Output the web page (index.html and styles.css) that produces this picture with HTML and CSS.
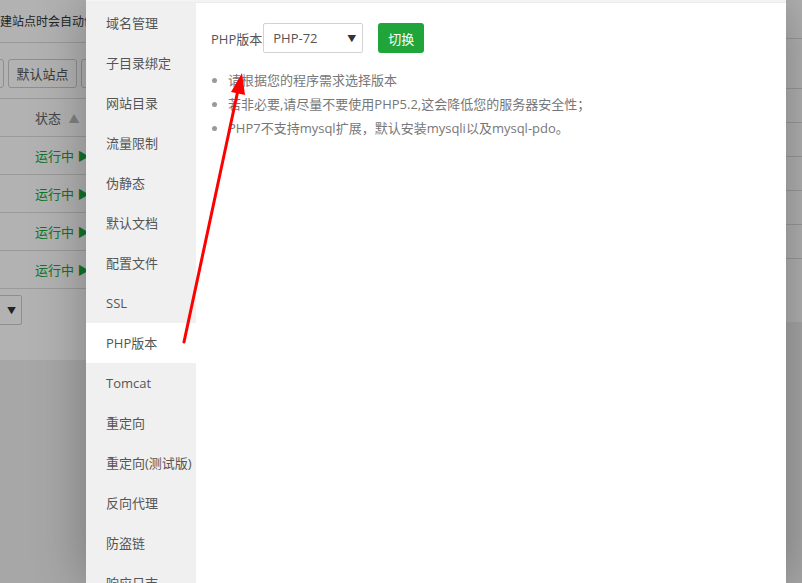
FILE: index.html
```html
<!DOCTYPE html>
<html lang="zh-CN">
<head>
  <meta charset="UTF-8">
  <meta name="viewport" content="width=device-width, initial-scale=1.0">
  <title>网站设置 - PHP版本</title>
  <link rel="stylesheet" href="styles.css">
</head>
<body>
  <!-- background site list (dimmed by the layer shade) -->
  <div class="page">
    <div class="page-left">
      <div class="panel">
        <div class="tip">建站点时会自动创建</div>
        <div class="toolbar">
          <span class="btn btn-cut"></span>
          <span class="btn">默认站点</span>
          <span class="btn btn-next"></span>
        </div>
        <div class="table">
          <div class="row head">状态 <span class="sort">▲</span></div>
          <div class="row"><span class="run">运行中 <i>▶</i></span></div>
          <div class="row"><span class="run">运行中 <i>▶</i></span></div>
          <div class="row"><span class="run">运行中 <i>▶</i></span></div>
          <div class="row"><span class="run">运行中 <i>▶</i></span></div>
        </div>
        <div class="pager"><span class="pager-select">▼</span></div>
      </div>
    </div>
    <div class="page-mid"></div>
    <div class="page-right">
      <div class="panel panel-right">
        <div class="r-row r-top"></div>
        <div class="r-row r-tall"></div>
        <div class="r-row"></div>
        <div class="r-row"></div>
        <div class="r-row"></div>
        <div class="r-row"></div>
        <div class="r-row"></div>
        <div class="r-row r-last"></div>
      </div>
    </div>
  </div>

  <div class="shade"></div>

  <div class="layer">
    <div class="layer-top"></div>
    <div class="layer-body">
      <ul class="side-menu">
        <li>域名管理</li>
        <li>子目录绑定</li>
        <li>网站目录</li>
        <li>流量限制</li>
        <li>伪静态</li>
        <li>默认文档</li>
        <li>配置文件</li>
        <li>SSL</li>
        <li class="active">PHP版本</li>
        <li>Tomcat</li>
        <li>重定向</li>
        <li>重定向(测试版)</li>
        <li>反向代理</li>
        <li>防盗链</li>
        <li>响应日志</li>
      </ul>
      <div class="content">
        <div class="version-line">
          <label class="version-label" for="php-select">PHP版本</label>
          <div class="select-box" id="php-select">
            <span>PHP-72</span>
            <span class="caret">▼</span>
          </div>
          <button class="switch-button">切换</button>
        </div>
        <ul class="help-list">
          <li>请根据您的程序需求选择版本</li>
          <li>若非必要,请尽量不要使用PHP5.2,这会降低您的服务器安全性；</li>
          <li>PHP7不支持mysql扩展，默认安装mysqli以及mysql-pdo。</li>
        </ul>
      </div>
    </div>
  </div>

  <!-- annotation arrow drawn over the screenshot -->
  <svg class="arrow" width="802" height="583" viewBox="0 0 802 583">
    <line x1="184" y1="342" x2="238" y2="90" stroke="#ff0000" stroke-width="3" stroke-linecap="round"/>
    <polygon points="242,73 245,95 231,92" fill="#ff0000"/>
  </svg>
</body>
</html>
```

FILE: styles.css
```css
* {
  margin: 0;
  padding: 0;
  box-sizing: border-box;
}

body {
  width: 802px;
  height: 583px;
  overflow: hidden;
  position: relative;
  font-family: "Open Sans", "Noto Sans CJK SC", sans-serif;
  font-size: 13px;
  color: #333;
  background: #f0f0f0;
}

ul {
  list-style: none;
}

/* background page */
.page {
  display: grid;
  grid-template-columns: 86px 1fr 16px;
  height: 583px;
}

.page-left {
  overflow: hidden;
}

.panel {
  background: #fff;
  height: 360px;
}

.tip {
  height: 43px;
  line-height: 44px;
  font-size: 12px;
  white-space: nowrap;
  overflow: hidden;
  border-bottom: 1px solid #ddd;
}

.toolbar {
  display: flex;
  gap: 4px;
  padding: 16px 0 0 0;
  height: 56px;
  border-bottom: 1px solid #ddd;
  margin-left: -60px;
}

.btn {
  display: flex;
  flex-shrink: 0;
  align-items: center;
  justify-content: center;
  width: 69px;
  height: 29px;
  border: 1px solid #ccc;
  border-radius: 3px;
  font-size: 13px;
  color: #555;
  white-space: nowrap;
}

.btn-cut {
  width: 64px;
}

.row {
  height: 38px;
  line-height: 38px;
  padding-left: 35px;
  border-bottom: 1px solid #ddd;
  white-space: nowrap;
  color: #555;
}

.row.head {
  color: #666;
}

.sort {
  color: #bbb;
  font-size: 11px;
  margin-left: 4px;
}

.run {
  color: #20a53a;
}

.run i {
  font-style: normal;
  font-size: 12px;
  color: #20a53a;
}

.pager {
  padding-top: 6px;
}

.pager-select {
  display: flex;
  align-items: center;
  justify-content: flex-end;
  width: 23px;
  height: 30px;
  margin-left: -1px;
  padding-right: 5px;
  border: 1px solid #ccc;
  border-radius: 0 2px 2px 0;
  font-size: 9px;
  color: #333;
}

.panel-right {
  height: 322px;
}

.r-row {
  height: 34px;
  border-bottom: 1px solid #ddd;
}

.r-top {
  height: 39px;
}

.r-tall {
  height: 50px;
}

.r-last {
  height: 63px;
  border-bottom: none;
}

/* layer shade */
.shade {
  position: absolute;
  inset: 0;
  background: rgba(0, 0, 0, 0.3);
}

/* layer */
.layer {
  position: absolute;
  top: 0;
  left: 86px;
  width: 700px;
  height: 583px;
  background: #fff;
  box-shadow: 1px 1px 50px rgba(0, 0, 0, 0.3);
  display: flex;
  flex-direction: column;
}

.layer-top {
  height: 3px;
  background: #f3f3f3;
  border-bottom: 1px solid #ececec;
}

.layer-body {
  display: flex;
  flex: 1;
  min-height: 0;
}

.side-menu {
  width: 110px;
  background: #f0f0f0;
  overflow: hidden;
}

.side-menu li {
  height: 40px;
  line-height: 40px;
  padding-left: 20px;
  color: #555;
  white-space: nowrap;
}

.side-menu li.active {
  background: #fff;
}

.content {
  flex: 1;
  padding: 20px 15px;
}

.version-line {
  display: flex;
  align-items: center;
}

.version-label {
  color: #555;
  margin-right: 1px;
}

.select-box {
  display: flex;
  align-items: center;
  justify-content: space-between;
  width: 100px;
  height: 30px;
  padding: 0 6px 0 9px;
  border: 1px solid #d2d2d2;
  border-radius: 2px;
  color: #555;
}

.caret {
  font-size: 9px;
  color: #333;
}

.switch-button {
  margin-left: 15px;
  width: 46px;
  height: 30px;
  border: none;
  border-radius: 3px;
  background: #20a53a;
  color: #fff;
  font-family: inherit;
  font-size: 13px;
}

.help-list {
  margin-top: 15px;
  padding-left: 17px;
  list-style: disc;
  color: #777;
}

.help-list li {
  line-height: 24px;
}

.help-list li::marker {
  color: #999;
}

.arrow {
  position: absolute;
  top: 0;
  left: 0;
  pointer-events: none;
}
```
